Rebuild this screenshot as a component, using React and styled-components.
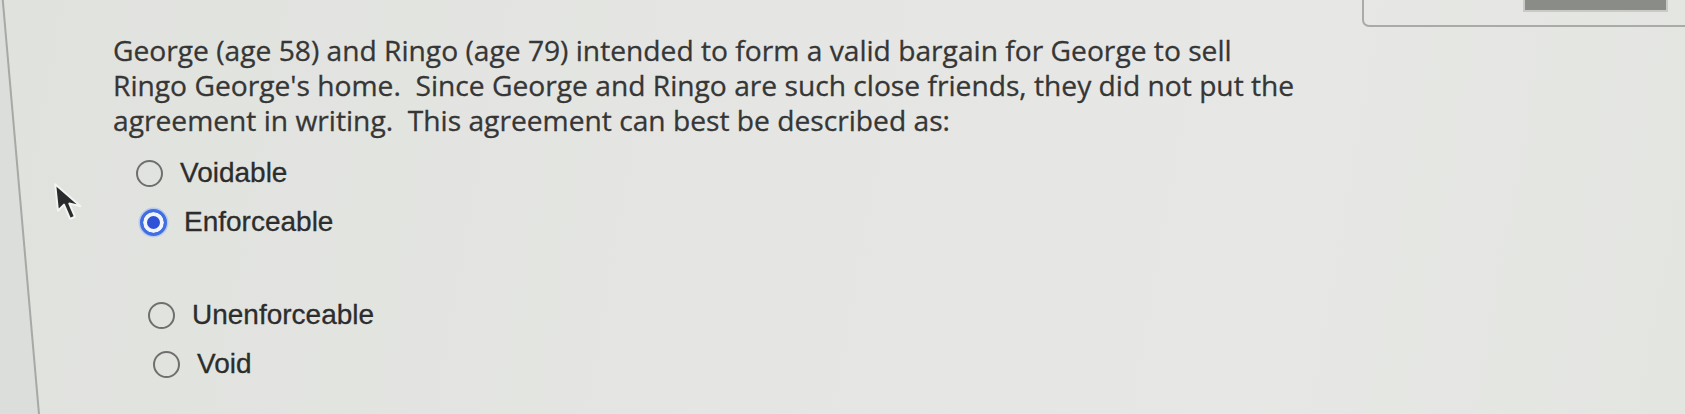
import styled, { createGlobalStyle } from 'styled-components'

const GlobalStyle = createGlobalStyle`
 html, body {
  margin: 0;
  padding: 0;
  background: #e2e4e0;
 }
`

const Page = styled.div`
 position: relative;
 width: 1685px;
 height: 414px;
 overflow: hidden;
 background: linear-gradient(100deg, #e0e2de 0%, #e5e6e3 45%, #e7e8e5 75%, #e3e5e1 100%);
 &::before {
  content: '';
  position: absolute;
  left: -40px;
  top: -20px;
  width: 40px;
  height: 450px;
  border-right: 2px solid #a7a9a5;
  background: #dcdedb;
  transform: skewX(5deg);
  transform-origin: top left;
 }
`

const TopBar = styled.div`
 display: flex;
 justify-content: flex-end;
 height: 26px;
`

const Panel = styled.div`
 width: 333px;
 height: 27px;
 margin-right: -10px;
 border: 2px solid #a9aba7;
 border-top: none;
 border-radius: 0 0 0 7px;
 display: flex;
 padding-left: 159px;
 box-sizing: border-box;
`

const PanelSlot = styled.div`
 width: 141px;
 height: 10px;
 background: #8a8c88;
 border: 2px solid #c9cac6;
 border-top: none;
`

const Question = styled.div`
 margin: 7px 0 0 113px;
 font-family: 'Open Sans', 'Noto Sans', sans-serif;
 font-size: 28.2px;
 line-height: 35px;
 color: #353635;
 -webkit-text-stroke: 0.3px #353635;
 white-space: nowrap;
`

const Options = styled.div`
 margin: 17px 0 0 113px;
 display: flex;
 flex-direction: column;
 gap: 13px;
`

const Option = styled.label`
 display: flex;
 align-items: center;
 height: 36px;
 gap: 17px;
 margin-left: ${p => p.$indent}px;
 margin-top: ${p => p.$extra || 0}px;
 font-family: 'Liberation Sans', Arial, sans-serif;
 font-size: 28px;
 color: #2c2d2c;
 -webkit-text-stroke: 0.3px #2c2d2c;
`

const Radio = styled.span`
 box-sizing: border-box;
 width: 27px;
 height: 27px;
 border-radius: 50%;
 flex: none;
 border: ${p => (p.$checked ? '3px solid #3f6fe0' : '2.5px solid #6f706e')};
 background: ${p => (p.$checked ? '#2d52d8' : 'transparent')};
 box-shadow: ${p => (p.$checked ? 'inset 0 0 0 4px #f2f4fb, 0 0 0 1.5px #b9c9ef' : 'none')};
`

const Cursor = styled.svg`
 position: absolute;
 left: 53px;
 top: 182px;
 width: 33px;
 height: 42px;
`

const options = [
 { label: 'Voidable', indent: 23 },
 { label: 'Enforceable', indent: 27, checked: true },
 { label: 'Unenforceable', indent: 35, extra: 44 },
 { label: 'Void', indent: 40 },
]

export default function App() {
 return (
  <Page>
   <GlobalStyle />
   <TopBar>
    <Panel>
     <PanelSlot />
    </Panel>
   </TopBar>
   <Question>
    George (age 58) and Ringo (age 79) intended to form a valid bargain for George to sell
    <br />
    Ringo George's home.&nbsp; Since George and Ringo are such close friends, they did not put the
    <br />
    agreement in writing.&nbsp; This agreement can best be described as:
   </Question>
   <Options>
    {options.map(o => (
     <Option key={o.label} $indent={o.indent} $extra={o.extra}>
      <Radio $checked={o.checked} />
      {o.label}
     </Option>
    ))}
   </Options>
   <Cursor viewBox="0 0 30 38">
    <path
     d="M2 2 L4.5 26 L10 20.5 L15.5 33.5 L20 31.5 L14.8 19.5 L25 22 Z"
     fill="#2a2b2d"
     stroke="#f4f5f3"
     strokeWidth="1.8"
     strokeLinejoin="round"
    />
   </Cursor>
  </Page>
 )
}
